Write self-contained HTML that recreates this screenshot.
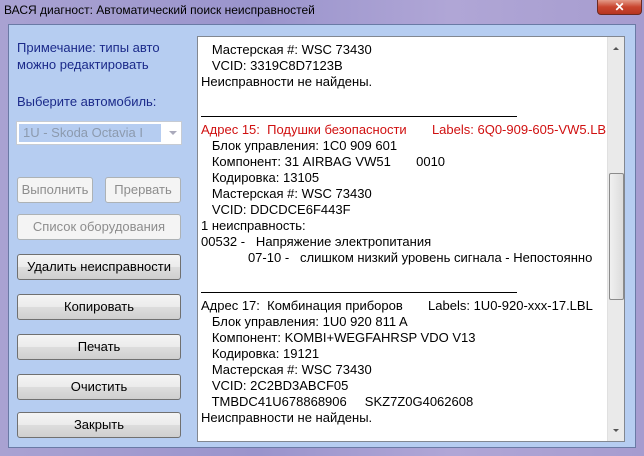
<!DOCTYPE html>
<html><head><meta charset="utf-8"><style>
*{margin:0;padding:0;box-sizing:border-box}
body{width:644px;height:456px;overflow:hidden;font-family:"Liberation Sans",Arial,sans-serif;background:linear-gradient(90deg,#a9a2d2,#9a94cc 40%,#b0a6d6 70%,#a69ccf);position:relative}
.title{position:absolute;left:4px;top:3px;font-size:12px;color:#000}
.close{position:absolute;left:597px;top:0;width:45px;height:15px;border:1px solid #6b2a22;border-top:none;border-radius:0 0 4px 4px;background:linear-gradient(#e49a88,#c9452f 50%,#b73520);color:#fff;font-size:12px;font-weight:bold;text-align:center;line-height:14px}
.client{position:absolute;left:8px;top:24px;width:628px;height:424px;background:#b6cdf1;border:1px solid #6a7aa5}
.lbl{position:absolute;left:17px;font-size:13px;color:#1b2a8a;line-height:17px}
.combo{position:absolute;left:16px;top:121px;width:166px;height:24px;background:#fff;border:1px solid #c6cbd3}
.combo span{position:absolute;left:2px;top:2px;height:18px;width:142px;background:#b6cdf1;color:#8c9aae;font-size:13px;line-height:18px;padding-left:4px}
.combo i{position:absolute;right:4px;top:9px;border:4px solid transparent;border-top:4px solid #aab;}
.btn{position:absolute;height:26px;border:1px solid #707070;border-radius:3px;background:linear-gradient(#f4f4f4,#ebebeb 50%,#dddddd 50%,#cfcfcf);font-size:13px;text-align:center;line-height:24px;color:#000}
.dis{border-color:#adb2b5;background:#f4f4f4;color:#8d8d8d}
.box{position:absolute;left:197px;top:36px;width:428px;height:406px;background:#fff;border:1px solid #828790;overflow:hidden}
.txt{position:absolute;left:3px;top:5px;font-size:13px;line-height:16px;color:#000;white-space:pre}
.rule{display:inline-block;width:316px;border-bottom:1px solid #000;height:11px;vertical-align:top}
.red{color:#d01010}
.sb{position:absolute;right:0;top:0;width:17px;height:404px;background:#eaeaea;border-left:1px solid #e0e0e0}
.thumb{position:absolute;left:1px;top:136px;width:15px;height:127px;border:1px solid #8b8b8b;border-radius:2px;background:linear-gradient(90deg,#f0f0f0,#dcdcdc)}
</style></head><body>
<div class="title">ВАСЯ диагност: Автоматический поиск неисправностей</div>
<div class="close">✕</div>
<div class="client"></div>
<div class="lbl" style="top:39px">Примечание: типы авто<br>можно редактировать</div>
<div class="lbl" style="top:93px">Выберите автомобиль:</div>
<div class="combo"><span>1U - Skoda Octavia I</span><i></i></div>
<div class="btn dis" style="left:17px;top:177px;width:76px">Выполнить</div>
<div class="btn dis" style="left:105px;top:177px;width:76px">Прервать</div>
<div class="btn dis" style="left:17px;top:214px;width:164px">Список оборудования</div>
<div class="btn" style="left:17px;top:254px;width:164px">Удалить неисправности</div>
<div class="btn" style="left:17px;top:294px;width:164px">Копировать</div>
<div class="btn" style="left:17px;top:334px;width:164px">Печать</div>
<div class="btn" style="left:17px;top:374px;width:164px">Очистить</div>
<div class="btn" style="left:17px;top:412px;width:164px">Закрыть</div>
<div class="box"><div class="txt">   Мастерская #: WSC 73430
   VCID: 3319C8D7123B
Неисправности не найдены.

<span class="rule"></span>
<span class="red">Адрес 15:  Подушки безопасности       Labels: 6Q0-909-605-VW5.LBL</span>
   Блок управления: 1C0 909 601
   Компонент: 31 AIRBAG VW51       0010
   Кодировка: 13105
   Мастерская #: WSC 73430
   VCID: DDCDCE6F443F
1 неисправность:
00532 -   Напряжение электропитания
             07-10 -   слишком низкий уровень сигнала - Непостоянно

<span class="rule"></span>
Адрес 17:  Комбинация приборов       Labels: 1U0-920-xxx-17.LBL
   Блок управления: 1U0 920 811 A
   Компонент: KOMBI+WEGFAHRSP VDO V13
   Кодировка: 19121
   Мастерская #: WSC 73430
   VCID: 2C2BD3ABCF05
   TMBDC41U678868906     SKZ7Z0G4062608
Неисправности не найдены.</div>
<div class="sb"><div style="position:absolute;left:5px;top:7px;border:3px solid transparent;border-bottom:3px solid #555"></div><div class="thumb"></div><div style="position:absolute;left:5px;bottom:6px;border:3px solid transparent;border-top:3px solid #555"></div></div>
</div>
</body></html>
